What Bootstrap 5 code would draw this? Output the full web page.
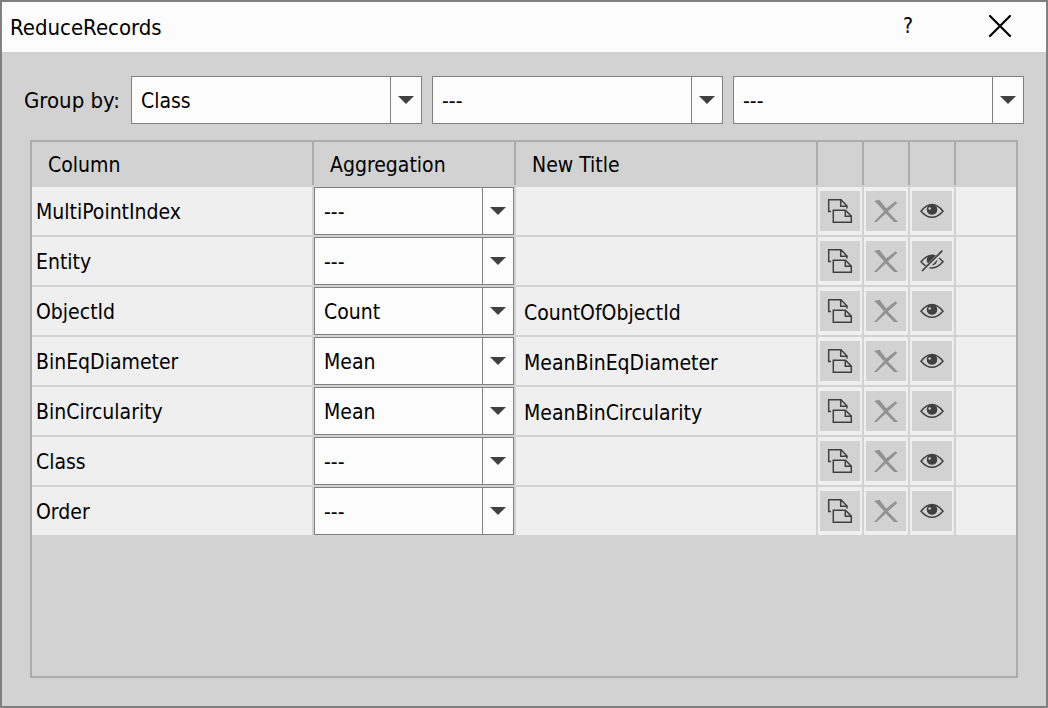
<!DOCTYPE html>
<html lang="en">
<head>
<meta charset="utf-8">
<meta name="viewport" content="width=device-width, initial-scale=1">
<title>ReduceRecords</title>
<link href="https://cdn.jsdelivr.net/npm/bootstrap@5.3.0/dist/css/bootstrap.min.css" rel="stylesheet">
<style>
  body {
    font-family: Tahoma, "DejaVu Sans Condensed", "DejaVu Sans", sans-serif;
    font-size: 21px;
    line-height: 28px;
    color: #000;
    background: #d2d2d2;
  }
  .dialog-frame { border: 2px solid #808080; }
  .title-bar { height: 50px; background: #fcfcfc; padding: 0 8px; }
  .title-bar h1 { font-size: 22px; line-height: 28px; }
  .title-btn { width: 92px; height: 48px; border: 0; background: none; color: #000; }
  .group-row { padding: 24px 22px 16px; gap: 10px; }
  .group-row label { width: 97px; font-size: 22px; padding-top: 2px; }
  .combo {
    height: 48px;
    padding: 2px 40px 0 9px;
    border: 1px solid #808080;
    border-radius: 0;
    color: #000;
    font-size: 21px;
    line-height: 28px;
    background-color: #fcfcfc;
    background-image:
      url("data:image/svg+xml,%3Csvg xmlns='http://www.w3.org/2000/svg' viewBox='0 0 16 8'%3E%3Cpath d='M0 0h16L8 8z' fill='%23404040'/%3E%3C/svg%3E"),
      linear-gradient(#808080, #808080);
    background-repeat: no-repeat;
    background-position: right 7px center, right 30px top;
    background-size: 16px 8px, 1px 100%;
  }
  .grid-panel { margin: 0 28px 28px; border: 2px solid #ababab; }
  .records { table-layout: fixed; border-collapse: separate; border-spacing: 0; }
  .records th { height: 43px; padding: 2px 16px 0; font-weight: 400; border-right: 2px solid #ababab; }
  .records td, .records tbody th {
    height: 50px;
    padding: 2px 4px 0;
    background: #efefef;
    border: 0 solid #d2d2d2;
    border-width: 2px 2px 0 0;
  }
  .records tr > :last-child { border-right-width: 0; }
  .records td.combo-cell { padding: 0; }
  .records td.new-title { padding: 4px 8px 0; }
  .records td.tool-cell { padding: 0 2px; }
  .c-name { width: 282px; }
  .c-agg { width: 202px; }
  .c-tool { width: 46px; }
  .c-rest { width: 60px; }
  .tool { width: 40px; height: 40px; padding: 0; border: 0; background: #d2d2d2; color: #404040; display: block; }
  .tool:disabled { color: #929292; }
  .tool svg, .title-btn svg { display: block; }
</style>
</head>
<body>
<svg class="d-none" xmlns="http://www.w3.org/2000/svg">
  <symbol id="i-copy" viewBox="0 0 40 40">
    <g fill="none" stroke="currentColor" stroke-width="1.5">
      <path d="M11 20.500H8.700v-11.800H21l6 6.300v2.500M20.700 8.700V15.300H27"/>
      <path d="M13.300 19.300h12.200l5.800 5.800v6.200H13.300zM25.300 19.300v6h6"/>
    </g>
  </symbol>
  <symbol id="i-remove" viewBox="0 0 40 40">
    <path fill="currentColor" d="M8 10 13.500 8.800 20.200 17.500 29.500 10.200 31.200 12 21.900 20.400 32 31H28L19.800 22.500 10.500 31H8L18 20.300 10.500 12z"/>
  </symbol>
  <symbol id="i-eye" viewBox="0 0 40 40">
    <path fill="none" stroke="currentColor" stroke-width="1.500" d="M9 20.200Q20 7 31 20.200 20 32.500 9 20.200z"/>
    <circle cx="20" cy="18.500" r="5.300" fill="currentColor"/>
    <circle cx="17.700" cy="17.500" r="1.200" fill="#d2d2d2"/>
  </symbol>
  <symbol id="i-eye-off" viewBox="0 0 40 40">
    <path fill="none" stroke="currentColor" stroke-width="1.500" d="M9 20.800Q20 7.600 31 20.800 20 33.100 9 20.800z"/>
    <circle cx="20" cy="19" r="5.300" fill="currentColor"/>
    <path stroke="#d2d2d2" stroke-width="4" d="M11 30.500 30 11"/>
    <path stroke="currentColor" stroke-width="1.700" d="M10 30 30.300 9.700"/>
  </symbol>
</svg>

<div class="dialog-frame min-vh-100 d-flex flex-column">
  <header class="title-bar d-flex align-items-start justify-content-between pe-0">
    <h1 class="m-0 mt-2 pt-1 fw-normal">ReduceRecords</h1>
    <div class="d-flex">
      <button type="button" class="title-btn" aria-label="Help">?</button>
      <button type="button" class="title-btn" aria-label="Close">
        <svg class="mx-auto" width="24" height="24" viewBox="0 0 24 24" fill="none" stroke="currentColor" stroke-width="2.200" stroke-linecap="round"><path d="M2 2l20 20M22 2 2 22"/></svg>
      </button>
    </div>
  </header>

  <main class="flex-grow-1 d-flex flex-column">
    <div class="group-row d-flex align-items-center">
      <label for="group1" class="flex-shrink-0">Group by:</label>
      <select id="group1" class="form-select combo"><option>Class</option><option>---</option></select>
      <select id="group2" class="form-select combo" aria-label="Second group"><option>---</option></select>
      <select id="group3" class="form-select combo" aria-label="Third group"><option>---</option></select>
    </div>

    <div class="grid-panel flex-grow-1">
      <table class="records w-100">
        <colgroup>
          <col class="c-name"><col class="c-agg"><col>
          <col class="c-tool"><col class="c-tool"><col class="c-tool"><col class="c-rest">
        </colgroup>
        <thead>
          <tr>
            <th scope="col">Column</th><th scope="col">Aggregation</th><th scope="col">New Title</th>
            <th></th><th></th><th></th><th></th>
          </tr>
        </thead>
        <tbody id="rows"></tbody>
      </table>
    </div>
  </main>
</div>

<script src="https://cdn.jsdelivr.net/npm/bootstrap@5.3.0/dist/js/bootstrap.bundle.min.js"></script>
<script>
  const records = [
    ["MultiPointIndex", "---", "", true],
    ["Entity", "---", "", false],
    ["ObjectId", "Count", "CountOfObjectId", true],
    ["BinEqDiameter", "Mean", "MeanBinEqDiameter", true],
    ["BinCircularity", "Mean", "MeanBinCircularity", true],
    ["Class", "---", "", true],
    ["Order", "---", "", true]
  ];
  const choices = ["---", "Count", "Mean"];
  const icon = id => `<svg width="40" height="40" aria-hidden="true"><use href="#${id}"/></svg>`;
  document.getElementById("rows").innerHTML = records.map(([name, agg, title, shown]) => `
    <tr>
      <th scope="row">${name}</th>
      <td class="combo-cell"><select class="form-select combo" aria-label="Aggregation of ${name}">
        ${choices.map(c => `<option${c === agg ? " selected" : ""}>${c}</option>`).join("")}
      </select></td>
      <td class="new-title">${title}</td>
      <td class="tool-cell"><button type="button" class="tool" aria-label="Duplicate ${name}">${icon("i-copy")}</button></td>
      <td class="tool-cell"><button type="button" class="tool" aria-label="Remove ${name}" disabled>${icon("i-remove")}</button></td>
      <td class="tool-cell"><button type="button" class="tool" aria-label="Visibility of ${name}">${icon(shown ? "i-eye" : "i-eye-off")}</button></td>
      <td></td>
    </tr>`).join("");
</script>
</body>
</html>
